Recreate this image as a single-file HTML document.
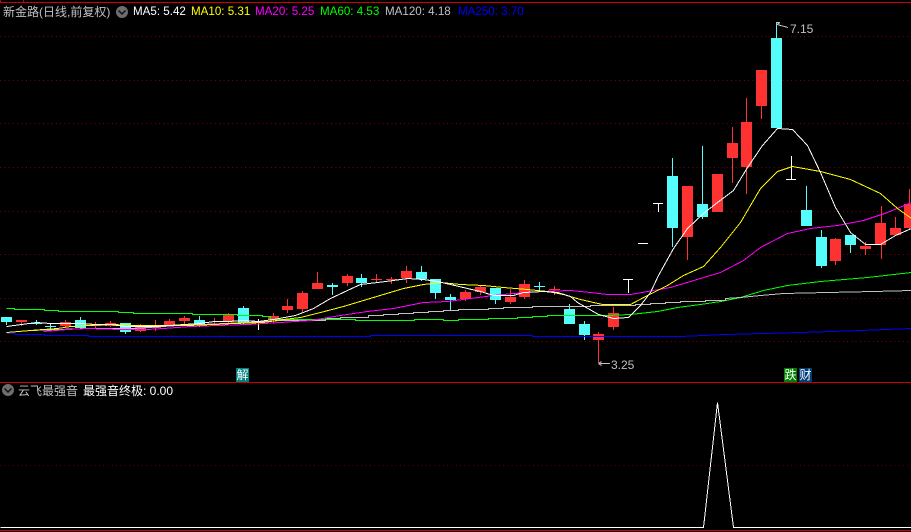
<!DOCTYPE html>
<html><head><meta charset="utf-8"><style>
html,body{margin:0;padding:0;background:#000;}
#w{position:relative;width:911px;height:532px;overflow:hidden;background:#000;font-family:"Liberation Sans","WenQuanYi Zen Hei","Noto Sans CJK SC",sans-serif;font-size:12px;line-height:14px;}
#w svg{position:absolute;left:0;top:0;}
#w span{position:absolute;white-space:nowrap;}
#w span.ma{font-size:11.6px;}
.tag{color:#fff;width:13px;height:14px;line-height:14px;text-align:center;font-size:12px;}
</style></head><body><div id="w">
<svg width="911" height="532" viewBox="0 0 911 532" shape-rendering="crispEdges" fill="none">
<path fill="#d00000" d="M0 2h911v1h-911zM0 0h1v2h-1zM23 0h1v2h-1zM0 382h911v1h-911zM0 530h911v1h-911z"/>
<path d="M0 36.5H911M0 80.5H911M0 123.5H911M0 167.5H911M0 211.5H911M0 254.5H911M0 298.5H911M0 341.5H911" stroke="#7c0000" stroke-dasharray="1 3.3"/>
<path d="M0 465.5H911" stroke="#600000" stroke-dasharray="1 3.3"/>
<path fill="#ff3232" d="
M16 320h11v2h-11zM21 320h1v6h-1z
M60 322h11v4h-11zM65 320h1v8h-1z
M90 324h11v2h-11zM95 322h1v7h-1z
M105 323h11v3h-11zM110 321h1v6h-1z
M135 326h11v5h-11zM140 324h1v8h-1z
M150 326h11v2h-11zM155 320h1v11h-1z
M164 321h11v4h-11zM169 319h1v7h-1z
M179 318h11v3h-11zM184 316h1v10h-1z
M209 324h11v1h-11zM214 318h1v7h-1z
M223 315h11v7h-11zM228 313h1v10h-1z
M268 316h11v4h-11zM273 313h1v10h-1z
M282 306h11v4h-11zM287 299h1v14h-1z
M297 293h11v16h-11zM302 291h1v21h-1z
M312 283h11v6h-11zM317 272h1v17h-1z
M342 276h11v7h-11zM347 274h1v12h-1z
M371 279h11v1h-11zM376 274h1v8h-1z
M386 279h11v1h-11zM391 277h1v7h-1z
M401 271h11v7h-11zM406 266h1v17h-1z
M460 292h11v7h-11zM465 290h1v11h-1z
M475 287h11v5h-11zM480 286h1v9h-1z
M505 297h11v5h-11zM510 289h1v15h-1z
M519 284h11v13h-11zM524 280h1v19h-1z
M549 289h11v1h-11zM554 286h1v9h-1z
M593 334h11v6h-11zM598 332h1v31h-1z
M608 313h11v14h-11zM613 307h1v23h-1z
M682 186h11v51h-11zM687 186h1v74h-1z
M712 174h11v38h-11z
M727 143h11v15h-11zM732 127h1v56h-1z
M741 122h11v45h-11zM746 98h1v96h-1z
M756 70h11v36h-11zM761 70h1v49h-1z
M830 239h11v22h-11zM835 238h1v27h-1z
M860 246h11v3h-11zM865 242h1v13h-1z
M875 223h11v22h-11zM881 206h1v53h-1z
M890 228h11v7h-11zM895 217h1v18h-1z
M904 204h11v24h-11zM909 189h1v40h-1z"/>
<path fill="#54fcfc" d="
M1 317h11v5h-11zM6 317h1v8h-1z
M31 323h11v1h-11zM36 320h1v5h-1z
M45 326h11v1h-11zM50 323h1v6h-1z
M75 320h11v8h-11zM80 317h1v12h-1z
M120 323h11v9h-11zM125 323h1v11h-1z
M194 320h11v5h-11zM199 316h1v11h-1z
M238 308h11v15h-11zM243 306h1v19h-1z
M327 285h11v2h-11zM332 283h1v12h-1z
M356 278h11v5h-11zM361 274h1v13h-1z
M416 272h11v7h-11zM421 266h1v15h-1z
M430 279h11v14h-11zM435 279h1v20h-1z
M445 297h11v3h-11zM450 294h1v16h-1z
M490 288h11v12h-11zM495 288h1v16h-1z
M534 286h11v1h-11zM539 282h1v8h-1z
M564 309h11v15h-11zM569 304h1v5h-1z
M579 324h11v11h-11zM584 321h1v19h-1z
M667 176h11v52h-11zM672 158h1v89h-1z
M697 204h11v13h-11zM702 146h1v73h-1z
M771 38h11v90h-11zM776 25h1v13h-1z
M801 210h11v16h-11zM806 186h1v24h-1z
M816 237h11v29h-11zM821 230h1v38h-1z
M845 235h11v10h-11zM850 245h1v8h-1z"/>
<path fill="#fff" d="M253 322h11v1h-11zM258 319h1v11h-1z
M623 279h10v1h-10zM628 279h1v14h-1z
M638 243h10v1h-10z
M653 203h10v1h-10zM658 203h1v9h-1z
M786 179h10v1h-10zM791 156h1v23h-1z"/>
<g transform="translate(.5 .5)" stroke-width="1">
<path stroke="#0000ff" d="M6 333H14V334H44V335H88V336H370V335H532V336H680L725 334L800 332L860 330L911 328" />
<path stroke="#00ff00" d="M6 308H14V309H44V310H58V311H118V312H133V313H192V314H237V315H262V316H270V319H355V320H414V319H443V320H458V319H488V318H517V317H532V316H547V315H607L630 314L657 311L677 307L700 304L720 301L740 297L763 290L787 285L820 281L867 277L911 272"/>
<path stroke="#c0c0c0" d="M6 332L30 330L58 329L87 328L133 328L177 325L225 323L267 321L280 320H325V318H340V317H368V315H383V314H398V313H413V312H428V311H443V310H458V309H488V308H503V307H532V306H590V305H635V304H650V303H665V302H680V301H705V300H725V298L740 297L760 295L783 293L827 292L873 291L911 290"/>
<path stroke="#ff00ff" d="M43 331L67 329L87 328L120 329L147 329L163 328L190 326L217 325L247 324L280 322L310 320L340 315L367 311L393 308L423 302L447 301L470 298L493 295L513 293L540 291L570 290L590 292L607 294L630 294L647 291L670 287L700 278L720 272L743 260L760 247L787 233L810 228L837 225L863 220L887 212L911 202"/>
<path stroke="#ffff00" d="M6 332L30 330L43 329L57 328L70 326L88 325L113 324L133 325L160 325L187 325L213 324L233 323L263 322L283 319L300 317L320 312L343 306L363 300L383 294L403 288L423 284L440 282L460 284L483 285L503 287L527 289L547 291L563 294L580 299L602 304L630 304L647 295L667 285L683 275L703 266L720 247L740 222L760 188L777 171L792 166L820 171L850 179L880 193L897 208L911 218"/>
<path stroke="#fff" d="M6 326L21 324L36 322L50 323L65 323L80 323L95 324L110 324L125 326L140 326L155 326L169 325L184 324L199 323L214 321L228 321L243 320L258 321L273 319L295 315L313 308L330 298L347 290L360 284L377 282L393 280L407 278L423 279L437 281L450 284L467 288L480 291L493 295L513 295L523 292L543 291L557 292L570 296L577 302L598 314L613 318L628 317L640 305L650 292L658 275L673 248L687 228L703 213L717 202L733 190L747 167L762 145L777 128L792 129L807 145L820 172L835 207L850 232L865 244L880 244L895 235L911 228"/>
<path stroke="#fff" d="M0 527H703L717 402L733 527H911"/>
</g>
<path stroke="#c0c0c0" d="M598.5 363.5H610M598.5 363.5l3 -2M598.5 363.5l3 2M776.5 25.5l0 -3h3M777 24.500L788 27.500M777 24.500l3 -2"/>
<circle cx="122" cy="12" r="6" fill="#6e6e6e" shape-rendering="auto"/>
<path d="M118.500 10.500L122 14L125.500 10.500" stroke="#111" stroke-width="1.5" shape-rendering="auto"/>
<circle cx="8" cy="390" r="6" fill="#6e6e6e" shape-rendering="auto"/>
<path d="M4.500 388.500L8 392L11.500 388.500" stroke="#111" stroke-width="1.5" shape-rendering="auto"/>
</svg>
<span style="left:3px;top:5px;color:#c0c0c0">新金路(日线,前复权)</span>
<span class="ma" style="left:133px;top:5px;color:#fff">MA5: 5.42</span>
<span class="ma" style="left:191px;top:5px;color:#ffff00">MA10: 5.31</span>
<span class="ma" style="left:255px;top:5px;color:#ff00ff">MA20: 5.25</span>
<span class="ma" style="left:320px;top:5px;color:#00ff00">MA60: 4.53</span>
<span class="ma" style="left:385px;top:5px;color:#c0c0c0">MA120: 4.18</span>
<span class="ma" style="left:458px;top:5px;color:#0000ff">MA250: 3.70</span>
<span style="left:790px;top:22px;color:#c0c0c0">7.15</span>
<span style="left:611px;top:358px;color:#c0c0c0">3.25</span>
<span class="tag" style="left:236px;top:368px;background:#008080">解</span>
<span class="tag" style="left:784px;top:368px;background:#008000">跌</span>
<span class="tag" style="left:799px;top:368px;background:#003c78">财</span>
<span style="left:18px;top:384px;color:#c0c0c0">云飞最强音</span>
<span style="left:83px;top:384px;color:#fff">最强音终极: 0.00</span>
</div></body></html>
